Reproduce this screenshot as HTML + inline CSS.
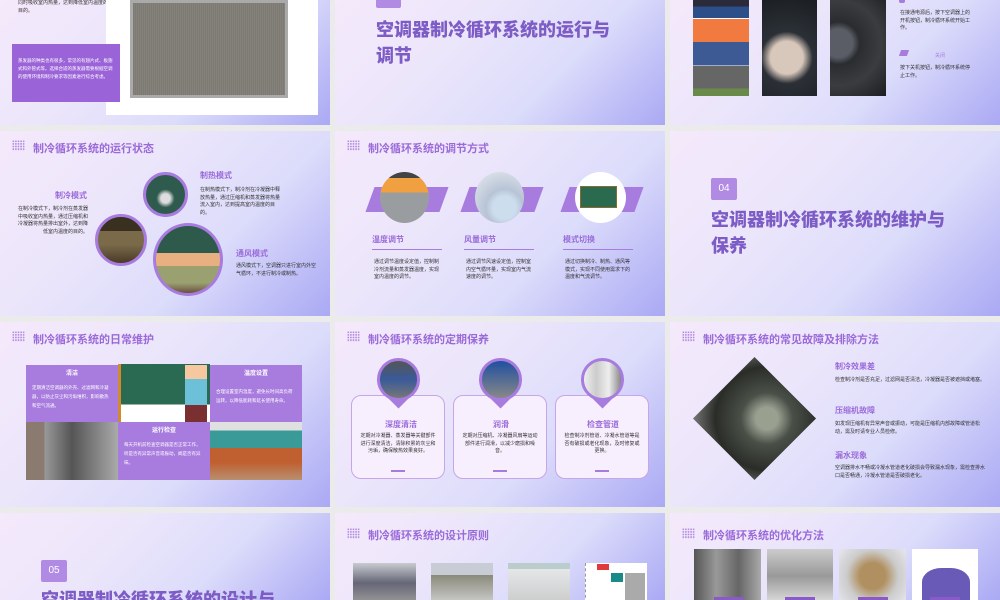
<!DOCTYPE html>
<html><head><meta charset="utf-8">
<style>
*{margin:0;padding:0;box-sizing:border-box}
body{width:1000px;height:600px;background:#ebebeb;position:relative;overflow:hidden;font-family:"Liberation Sans","Noto Sans CJK SC",sans-serif}
.s{position:absolute;overflow:hidden;background:linear-gradient(135deg,#f5e9fb 0%,#ece6fb 35%,#dcdcfb 65%,#aaa9f4 100%)}
.s>*{position:absolute}
.h{font-size:11px;color:#9a6ad9;left:33px;top:9px;font-weight:bold;white-space:nowrap}
.dots{left:12px;top:9px;width:13px;height:11px;background-image:radial-gradient(circle,#b48ee0 0.8px,transparent 1px);background-size:2.6px 2.6px}
.t{font-size:5px;line-height:7.5px;color:#333}
.lab{font-size:8px;color:#9a6ad9;font-weight:bold;white-space:nowrap}
.big{font-size:18px;line-height:26px;font-weight:900;color:#7e5cc6}
.badge{background:#b18ae4;color:#fff;font-size:12px;text-align:center;border-radius:2px}
.circ{border-radius:50%;border:3px solid #a87bde}
</style></head><body>

<!-- Row1 col1 -->
<div class="s" style="left:0;top:0;width:330px;height:125px">
  <div class="t" style="left:18px;top:0;width:90px">同时吸收室内热量，达到降低室内温度的目的。</div>
  <div style="left:106px;top:0;width:212px;height:115px;background:#fff"></div>
  <div style="left:130px;top:0;width:158px;height:98px;background:repeating-linear-gradient(90deg,#8a887f 0,#6d6b64 1px,#9a988f 2px);border:3px solid #aaa"></div>
  <div style="left:12px;top:44px;width:108px;height:58px;background:#9b63d8;padding:13px 6px 0 6px;color:#fff;font-size:4.5px;line-height:8px">蒸发器的种类也有很多，常见的有翅片式、板翅式和外管式等。选择合适的蒸发器需要根据空调的使用环境和制冷要求等因素进行综合考虑。</div>
</div>

<!-- Row1 col2 -->
<div class="s" style="left:335px;top:0;width:330px;height:125px">
  <div class="badge" style="left:41px;top:-14px;width:25px;height:22px"></div>
  <div class="big" style="left:41px;top:17px;width:238px">空调器制冷循环系统的运行与调节</div>
</div>

<!-- Row1 col3 -->
<div class="s" style="left:670px;top:0;width:330px;height:125px">
  <div style="left:23px;top:0;width:56px;height:96px;background:linear-gradient(#2a2a3a 0 7%,#2c4f8a 7% 19%,#fff 19% 20%,#f07a40 20% 44%,#3d5a94 44% 68%,#fff 68% 69%,#666 69% 92%,#6a8a4a 92%)"></div>
  <div style="left:92px;top:0;width:55px;height:96px;background:radial-gradient(circle at 45% 60%,#d8c7bb 0 25%,#2b3036 40%,#1a1e22)"></div>
  <div style="left:160px;top:0;width:56px;height:96px;background:radial-gradient(circle at 15% 45%,#5a5d66 0 20%,#2a2c30 30%,#3a3c40 60%,#1c1d20)"></div>
  <div style="left:229px;top:-3px;width:6px;height:6px;background:#a87bde;border-radius:2px"></div>
  <div class="t" style="left:230px;top:10px;width:70px">在接通电源后，按下空调器上的开机按钮，制冷循环系统开始工作。</div>
  <div style="left:230px;top:50px;width:8px;height:6px;background:#a87bde;transform:skew(-20deg)"></div>
  <div style="left:265px;top:52px;font-size:5px;color:#a87bde">关闭</div>
  <div class="t" style="left:230px;top:65px;width:70px">按下关机按钮，制冷循环系统停止工作。</div>
</div>

<!-- Row2 col1 -->
<div class="s" style="left:0;top:131px;width:330px;height:185px">
  <div class="dots"></div><div class="h">制冷循环系统的运行状态</div>
  <div class="lab" style="left:55px;top:59px">制冷模式</div>
  <div class="t" style="left:14px;top:75px;width:74px;text-align:right">在制冷模式下，制冷剂在蒸发器中吸收室内热量，通过压缩机和冷凝器将热量排出室外，达到降低室内温度的目的。</div>
  <div class="circ" style="left:143px;top:41px;width:45px;height:45px;background:radial-gradient(circle at 50% 60%,#ddd 0 15%,#2f5a4e 30%)"></div>
  <div class="circ" style="left:95px;top:83px;width:52px;height:52px;background:linear-gradient(#3a3020 0 30%,#7a6a4a 30% 60%,#4a3a28)"></div>
  <div class="circ" style="left:153px;top:92px;width:70px;height:73px;background:linear-gradient(#2e5a4c 0 40%,#e8b080 40% 60%,#9aa070 60% 85%,#6a5040)"></div>
  <div class="lab" style="left:200px;top:39px">制热模式</div>
  <div class="t" style="left:200px;top:56px;width:80px">在制热模式下，制冷剂在冷凝器中释放热量，通过压缩机和蒸发器将热量流入室内，达到提高室内温度的目的。</div>
  <div class="lab" style="left:236px;top:117px">通风模式</div>
  <div class="t" style="left:236px;top:132px;width:80px">通风模式下，空调器只进行室内外空气循环，不进行制冷或制热。</div>
</div>

<!-- Row2 col2 -->
<div class="s" style="left:335px;top:131px;width:330px;height:185px">
  <div class="dots"></div><div class="h">制冷循环系统的调节方式</div>
  <div style="left:35px;top:56px;width:74px;height:25px;background:#a87bde;transform:skew(-20deg)"></div>
  <div style="left:130px;top:56px;width:74px;height:25px;background:#a87bde;transform:skew(-20deg)"></div>
  <div style="left:230px;top:56px;width:74px;height:25px;background:#a87bde;transform:skew(-20deg)"></div>
  <div style="left:45px;top:41px;width:49px;height:51px;border-radius:50%;background:linear-gradient(#444 0 12%,#f0a040 12% 40%,#9a9da0 40%)"></div>
  <div style="left:140px;top:41px;width:49px;height:51px;border-radius:50%;background:radial-gradient(circle at 60% 70%,#cde 0 25%,#b8c4d6 40%,#e8ecf0)"></div>
  <div style="left:240px;top:41px;width:51px;height:51px;border-radius:50%;background:#fff"></div>
  <div style="left:245px;top:55px;width:37px;height:22px;background:#2a6a4e;border:1px solid #8a6a30"></div>
  <div class="lab" style="left:37px;top:103px">温度调节</div>
  <div class="lab" style="left:129px;top:103px">风量调节</div>
  <div class="lab" style="left:228px;top:103px">模式切换</div>
  <div style="left:37px;top:118px;width:70px;height:1px;background:#a87bde"></div>
  <div style="left:129px;top:118px;width:70px;height:1px;background:#a87bde"></div>
  <div style="left:228px;top:118px;width:70px;height:1px;background:#a87bde"></div>
  <div class="t" style="left:39px;top:128px;width:66px">通过调节温度设定值，控制制冷剂流量和蒸发器温度，实现室内温度的调节。</div>
  <div class="t" style="left:131px;top:128px;width:66px">通过调节风速设定值，控制室内空气循环量，实现室内气流速度的调节。</div>
  <div class="t" style="left:230px;top:128px;width:66px">通过切换制冷、制热、通风等模式，实现不同使用需求下的温度和气流调节。</div>
</div>

<!-- Row2 col3 -->
<div class="s" style="left:670px;top:131px;width:330px;height:185px">
  <div class="badge" style="left:41px;top:47px;width:26px;height:22px;line-height:22px;font-size:10px">04</div>
  <div class="big" style="left:41px;top:76px;width:238px">空调器制冷循环系统的维护与保养</div>
</div>

<!-- Row3 col1 -->
<div class="s" style="left:0;top:322px;width:330px;height:185px">
  <div class="dots"></div><div class="h">制冷循环系统的日常维护</div>
  <div style="left:26px;top:43px;width:92px;height:57px;background:#a87bde;color:#fff;padding:3px 6px"><div style="font-size:6px;font-weight:bold;text-align:center">清洁</div><div style="font-size:4.5px;line-height:9px;margin-top:6px">定期清洁空调器的外壳、过滤网和冷凝器，以防止灰尘和污垢堆积，影响散热和空气流通。</div></div>
  <div style="left:118px;top:42px;width:92px;height:58px;background:linear-gradient(#2b6a52 0 70%,#fff 70%);border-left:3px solid #d08a30"></div>
  <div style="left:185px;top:43px;width:22px;height:57px;background:linear-gradient(#f5c8a0 0 25%,#6cc0d8 25% 70%,#7a3030 70%)"></div>
  <div style="left:210px;top:43px;width:92px;height:57px;background:#a87bde;color:#fff;padding:3px 6px"><div style="font-size:6px;font-weight:bold;text-align:center">温度设置</div><div style="font-size:4.5px;line-height:9px;margin-top:10px">合理设置室内温度，避免长时间高负荷运转，以降低能耗和延长使用寿命。</div></div>
  <div style="left:26px;top:100px;width:92px;height:58px;background:linear-gradient(90deg,#8a7a70 0 20%,#9a9a9a 20%,#555 50%,#aaa)"></div>
  <div style="left:118px;top:100px;width:92px;height:58px;background:#a87bde;color:#fff;padding:3px 6px"><div style="font-size:6px;font-weight:bold;text-align:center">运行检查</div><div style="font-size:4.5px;line-height:9px;margin-top:6px">每天开机前检查空调器是否正常工作，听是否有异常声音或振动，闻是否有异味。</div></div>
  <div style="left:210px;top:100px;width:92px;height:58px;background:linear-gradient(#e0e0e0 0 15%,#3a9a98 15% 45%,#c06030 45% 70%,#b89070)"></div>
</div>

<!-- Row3 col2 -->
<div class="s" style="left:335px;top:322px;width:330px;height:185px">
  <div class="dots"></div><div class="h">制冷循环系统的定期保养</div>
  <div style="left:16px;top:73px;width:94px;height:84px;background:#f7effd;border:1px solid #c6a6e8;border-radius:10px"></div>
  <div style="left:118px;top:73px;width:94px;height:84px;background:#f7effd;border:1px solid #c6a6e8;border-radius:10px"></div>
  <div style="left:220px;top:73px;width:94px;height:84px;background:#f7effd;border:1px solid #c6a6e8;border-radius:10px"></div>
  <div style="left:55px;top:66px;width:17px;height:17px;background:#a87bde;transform:rotate(45deg)"></div>
  <div style="left:157px;top:66px;width:17px;height:17px;background:#a87bde;transform:rotate(45deg)"></div>
  <div style="left:259px;top:66px;width:17px;height:17px;background:#a87bde;transform:rotate(45deg)"></div>
  <div class="circ" style="left:42px;top:36px;width:43px;height:43px;background:linear-gradient(#555,#3a5a9a 50%,#777)"></div>
  <div class="circ" style="left:144px;top:36px;width:43px;height:43px;background:linear-gradient(#2050a0,#888)"></div>
  <div class="circ" style="left:246px;top:36px;width:43px;height:43px;background:linear-gradient(90deg,#eee,#ccc,#eee,#888)"></div>
  <div class="lab" style="left:50px;top:97px">深度清洁</div>
  <div class="lab" style="left:158px;top:97px">润滑</div>
  <div class="lab" style="left:252px;top:97px">检查管道</div>
  <div class="t" style="left:24px;top:111px;width:78px;text-align:center">定期对冷凝器、蒸发器等关键部件进行深度清洁，清除积累的灰尘和污垢，确保散热效果良好。</div>
  <div class="t" style="left:126px;top:111px;width:78px;text-align:center">定期对压缩机、冷凝器风扇等运动部件进行润滑，以减少磨损和噪音。</div>
  <div class="t" style="left:228px;top:111px;width:78px;text-align:center">检查制冷剂管道、冷凝水管道等是否有破损或老化现象，及时修复或更换。</div>
  <div style="left:56px;top:148px;width:14px;height:2px;background:#a87bde"></div>
  <div style="left:158px;top:148px;width:14px;height:2px;background:#a87bde"></div>
  <div style="left:260px;top:148px;width:14px;height:2px;background:#a87bde"></div>
</div>

<!-- Row3 col3 -->
<div class="s" style="left:670px;top:322px;width:330px;height:185px">
  <div class="dots"></div><div class="h">制冷循环系统的常见故障及排除方法</div>
  <div style="left:41px;top:53px;width:87px;height:87px;transform:rotate(45deg);background:radial-gradient(circle at 60% 40%,#9aa090 0 15%,#4a5048 35%,#2a2c28 70%,#777)"></div>
  <div class="lab" style="left:165px;top:39px">制冷效果差</div>
  <div class="t" style="left:165px;top:55px;width:150px">检查制冷剂是否充足，过滤网是否清洁，冷凝器是否被遮挡或堵塞。</div>
  <div class="lab" style="left:165px;top:83px">压缩机故障</div>
  <div class="t" style="left:165px;top:99px;width:152px">如发现压缩机有异常声音或振动，可能是压缩机内部故障或管道松动，需及时请专业人员检修。</div>
  <div class="lab" style="left:165px;top:128px">漏水现象</div>
  <div class="t" style="left:165px;top:143px;width:152px">空调器排水不畅或冷凝水管道老化破损会导致漏水现象，需检查排水口是否畅通，冷凝水管道是否破损老化。</div>
</div>

<!-- Row4 col1 -->
<div class="s" style="left:0;top:513px;width:330px;height:87px">
  <div class="badge" style="left:41px;top:47px;width:26px;height:22px;line-height:22px;font-size:10px">05</div>
  <div class="big" style="left:41px;top:74px;width:280px;white-space:nowrap">空调器制冷循环系统的设计与</div>
</div>

<!-- Row4 col2 -->
<div class="s" style="left:335px;top:513px;width:330px;height:87px">
  <div class="dots" style="top:15px"></div><div class="h" style="top:14px">制冷循环系统的设计原则</div>
  <div style="left:18px;top:50px;width:63px;height:40px;background:linear-gradient(#c8ccd0,#667 50%,#999)"></div>
  <div style="left:96px;top:50px;width:62px;height:40px;background:linear-gradient(#c8ccd4 0 30%,#8a8a7a 30%,#ccc)"></div>
  <div style="left:173px;top:50px;width:62px;height:40px;background:linear-gradient(#bcc 0 15%,#e4e6e8 15%,#ccc)"></div>
  <div style="left:250px;top:50px;width:62px;height:40px;background:#fff;border-left:1px dashed #999"></div>
  <div style="left:262px;top:51px;width:12px;height:6px;background:#e03a3a"></div>
  <div style="left:276px;top:60px;width:12px;height:9px;background:#1a8a88"></div>
  <div style="left:290px;top:60px;width:20px;height:30px;background:#aaa"></div>
</div>

<!-- Row4 col3 -->
<div class="s" style="left:670px;top:513px;width:330px;height:87px">
  <div class="dots" style="top:15px"></div><div class="h" style="top:14px">制冷循环系统的优化方法</div>
  <div style="left:24px;top:36px;width:67px;height:54px;background:linear-gradient(90deg,#555,#999,#666,#aaa)"></div>
  <div style="left:97px;top:36px;width:66px;height:54px;background:linear-gradient(#ccc,#999 50%,#ddd)"></div>
  <div style="left:169px;top:36px;width:67px;height:54px;background:radial-gradient(circle,#b09060 0 30%,#ccc 60%,#e6e6ee)"></div>
  <div style="left:242px;top:36px;width:66px;height:54px;background:#fff"></div>
  <div style="left:252px;top:55px;width:48px;height:35px;background:#6a5ab8;border-radius:40% 40% 0 0"></div>
  <div style="left:44px;top:84px;width:30px;height:6px;background:#8a5ac8"></div>
  <div style="left:115px;top:84px;width:30px;height:6px;background:#8a5ac8"></div>
  <div style="left:188px;top:84px;width:30px;height:6px;background:#8a5ac8"></div>
  <div style="left:260px;top:84px;width:30px;height:6px;background:#8a5ac8"></div>
</div>

</body></html>
